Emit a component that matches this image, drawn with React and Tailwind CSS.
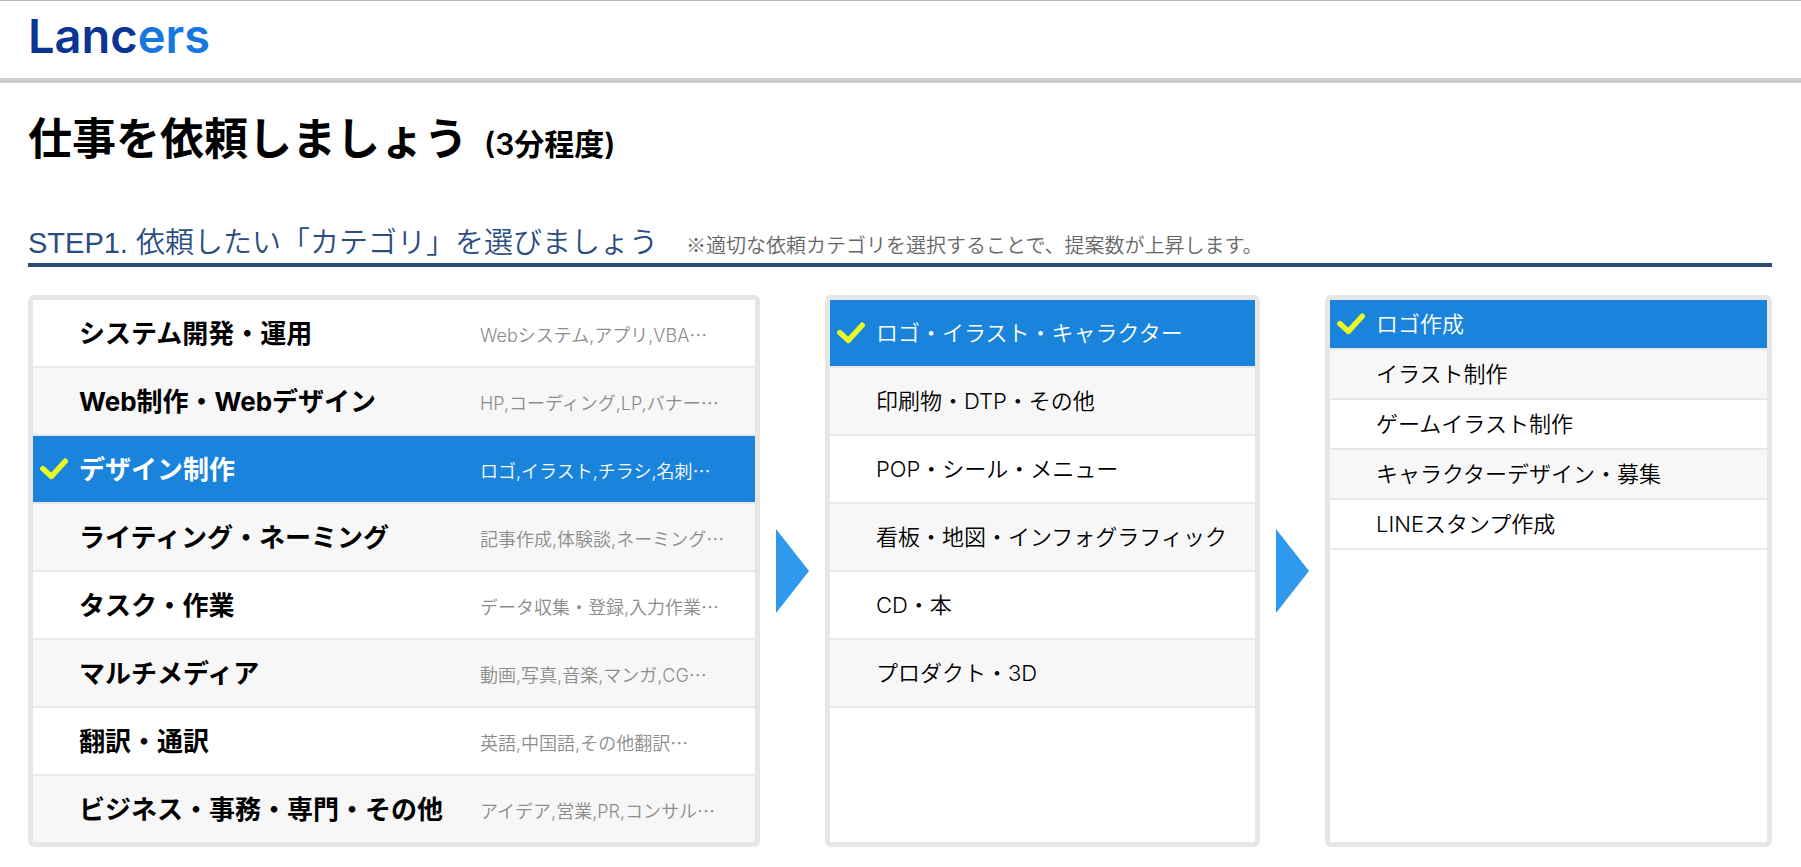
import { useState } from "react";

const categories = [
  ["システム開発・運用", "Webシステム,アプリ,VBA"],
  ["Web制作・Webデザイン", "HP,コーディング,LP,バナー"],
  ["デザイン制作", "ロゴ,イラスト,チラシ,名刺"],
  ["ライティング・ネーミング", "記事作成,体験談,ネーミング"],
  ["タスク・作業", "データ収集・登録,入力作業"],
  ["マルチメディア", "動画,写真,音楽,マンガ,CG"],
  ["翻訳・通訳", "英語,中国語,その他翻訳"],
  ["ビジネス・事務・専門・その他", "アイデア,営業,PR,コンサル"],
];

const genres = [
  "ロゴ・イラスト・キャラクター",
  "印刷物・DTP・その他",
  "POP・シール・メニュー",
  "看板・地図・インフォグラフィック",
  "CD・本",
  "プロダクト・3D",
];

const jobs = [
  "ロゴ作成",
  "イラスト制作",
  "ゲームイラスト制作",
  "キャラクターデザイン・募集",
  "LINEスタンプ作成",
];

function Check() {
  return (
    <svg viewBox="0 0 28 22" className="h-[22px] w-7" fill="none" aria-hidden="true">
      <path
        d="M2.8 10.6 11.4 18.4 25.2 3.2"
        stroke="#e8fb22"
        strokeWidth="5.4"
        strokeLinejoin="round"
        strokeLinecap="round"
      />
    </svg>
  );
}

function Arrow() {
  return (
    <div className="flex items-center justify-center">
      <svg viewBox="0 0 33 84" className="h-[84px] w-[33px]" aria-hidden="true">
        <path d="M0 0 33 42 0 84Z" fill="#2f99ed" />
      </svg>
    </div>
  );
}

function Panel({ label, children }) {
  return (
    <ul aria-label={label} className="min-w-0 rounded-md border-[5px] border-[#e6e6e6] bg-white">
      {children}
    </ul>
  );
}

function Row({ selected, index, last, short, onSelect, children }) {
  const tone = selected
    ? "bg-[#1a84dc] text-white"
    : index % 2
      ? "bg-[#f7f7f7] text-black"
      : "bg-white text-black";
  return (
    <li className={last ? "" : "border-b-2 border-[#e8e8e8]"}>
      <button
        type="button"
        aria-pressed={selected}
        onClick={onSelect}
        className={`flex w-full items-center pl-[7px] text-left ${short ? "h-12" : "h-[66px]"} ${tone}`}
      >
        <span className="flex w-[39px] shrink-0 items-center">{selected && <Check />}</span>
        {children}
      </button>
    </li>
  );
}

export default function App() {
  const [category, setCategory] = useState(2);
  const [genre, setGenre] = useState(0);
  const [job, setJob] = useState(0);

  return (
    <div
      lang="ja"
      className="min-h-screen bg-white font-['Inter','Noto_Sans_CJK_JP',sans-serif] text-black"
    >
      <header className="flex h-[83px] items-start border-t border-b-[5px] border-t-[#b4b4b4] border-b-[#cecece] px-7 pt-[9px]">
        <a href="/" className="text-[47px] leading-[52px] font-semibold text-[#0b3494]">
          Lanc<span className="text-[#1478e0]">ers</span>
        </a>
      </header>

      <main className="pr-[29px] pl-7">
        <h1 className="flex items-baseline gap-4 pt-6 text-[44px] leading-[64px] font-bold">
          仕事を依頼しましょう
          <small className="text-[30px] font-semibold">(3分程度)</small>
        </h1>

        <div className="mt-[47px] flex items-baseline gap-7 border-b-4 border-[#2d4a73]">
          <h2 className="font-['Liberation_Sans','Noto_Sans_CJK_JP',sans-serif] text-[29px] leading-10 font-[350] text-[#2b4d80]">
            STEP1. 依頼したい「カテゴリ」を選びましょう
          </h2>
          <p className="font-['Noto_Sans_CJK_JP',sans-serif] text-[20px] leading-8 font-[350] text-[#666666]">
            ※適切な依頼カテゴリを選択することで、提案数が上昇します。
          </p>
        </div>

        <div className="mt-7 grid grid-cols-[732fr_65px_435fr_65px_447fr]">
          <Panel label="カテゴリ">
            {categories.map(([name, hint], i) => (
              <Row
                key={name}
                index={i}
                selected={i === category}
                last={i === categories.length - 1}
                onSelect={() => setCategory(i)}
              >
                <span className="w-[401px] shrink-0 text-[26px] font-bold">{name}</span>
                <span
                  className={`pt-1 text-[18px] font-[350] whitespace-nowrap ${
                    i === category ? "text-white" : "text-[#8c8c8c]"
                  }`}
                >
                  {hint}
                  <span className="inline-block font-['Noto_Sans_CJK_JP',sans-serif] leading-none">
                    …
                  </span>
                </span>
              </Row>
            ))}
          </Panel>
          <Arrow />
          <Panel label="ジャンル">
            {genres.map((name, i) => (
              <Row key={name} index={i} selected={i === genre} onSelect={() => setGenre(i)}>
                <span className="text-[22px] font-[350] whitespace-nowrap">{name}</span>
              </Row>
            ))}
          </Panel>
          <Arrow />
          <Panel label="依頼内容">
            {jobs.map((name, i) => (
              <Row key={name} index={i} selected={i === job} short onSelect={() => setJob(i)}>
                <span className="text-[22px] font-[350] whitespace-nowrap">{name}</span>
              </Row>
            ))}
          </Panel>
        </div>
      </main>
    </div>
  );
}
